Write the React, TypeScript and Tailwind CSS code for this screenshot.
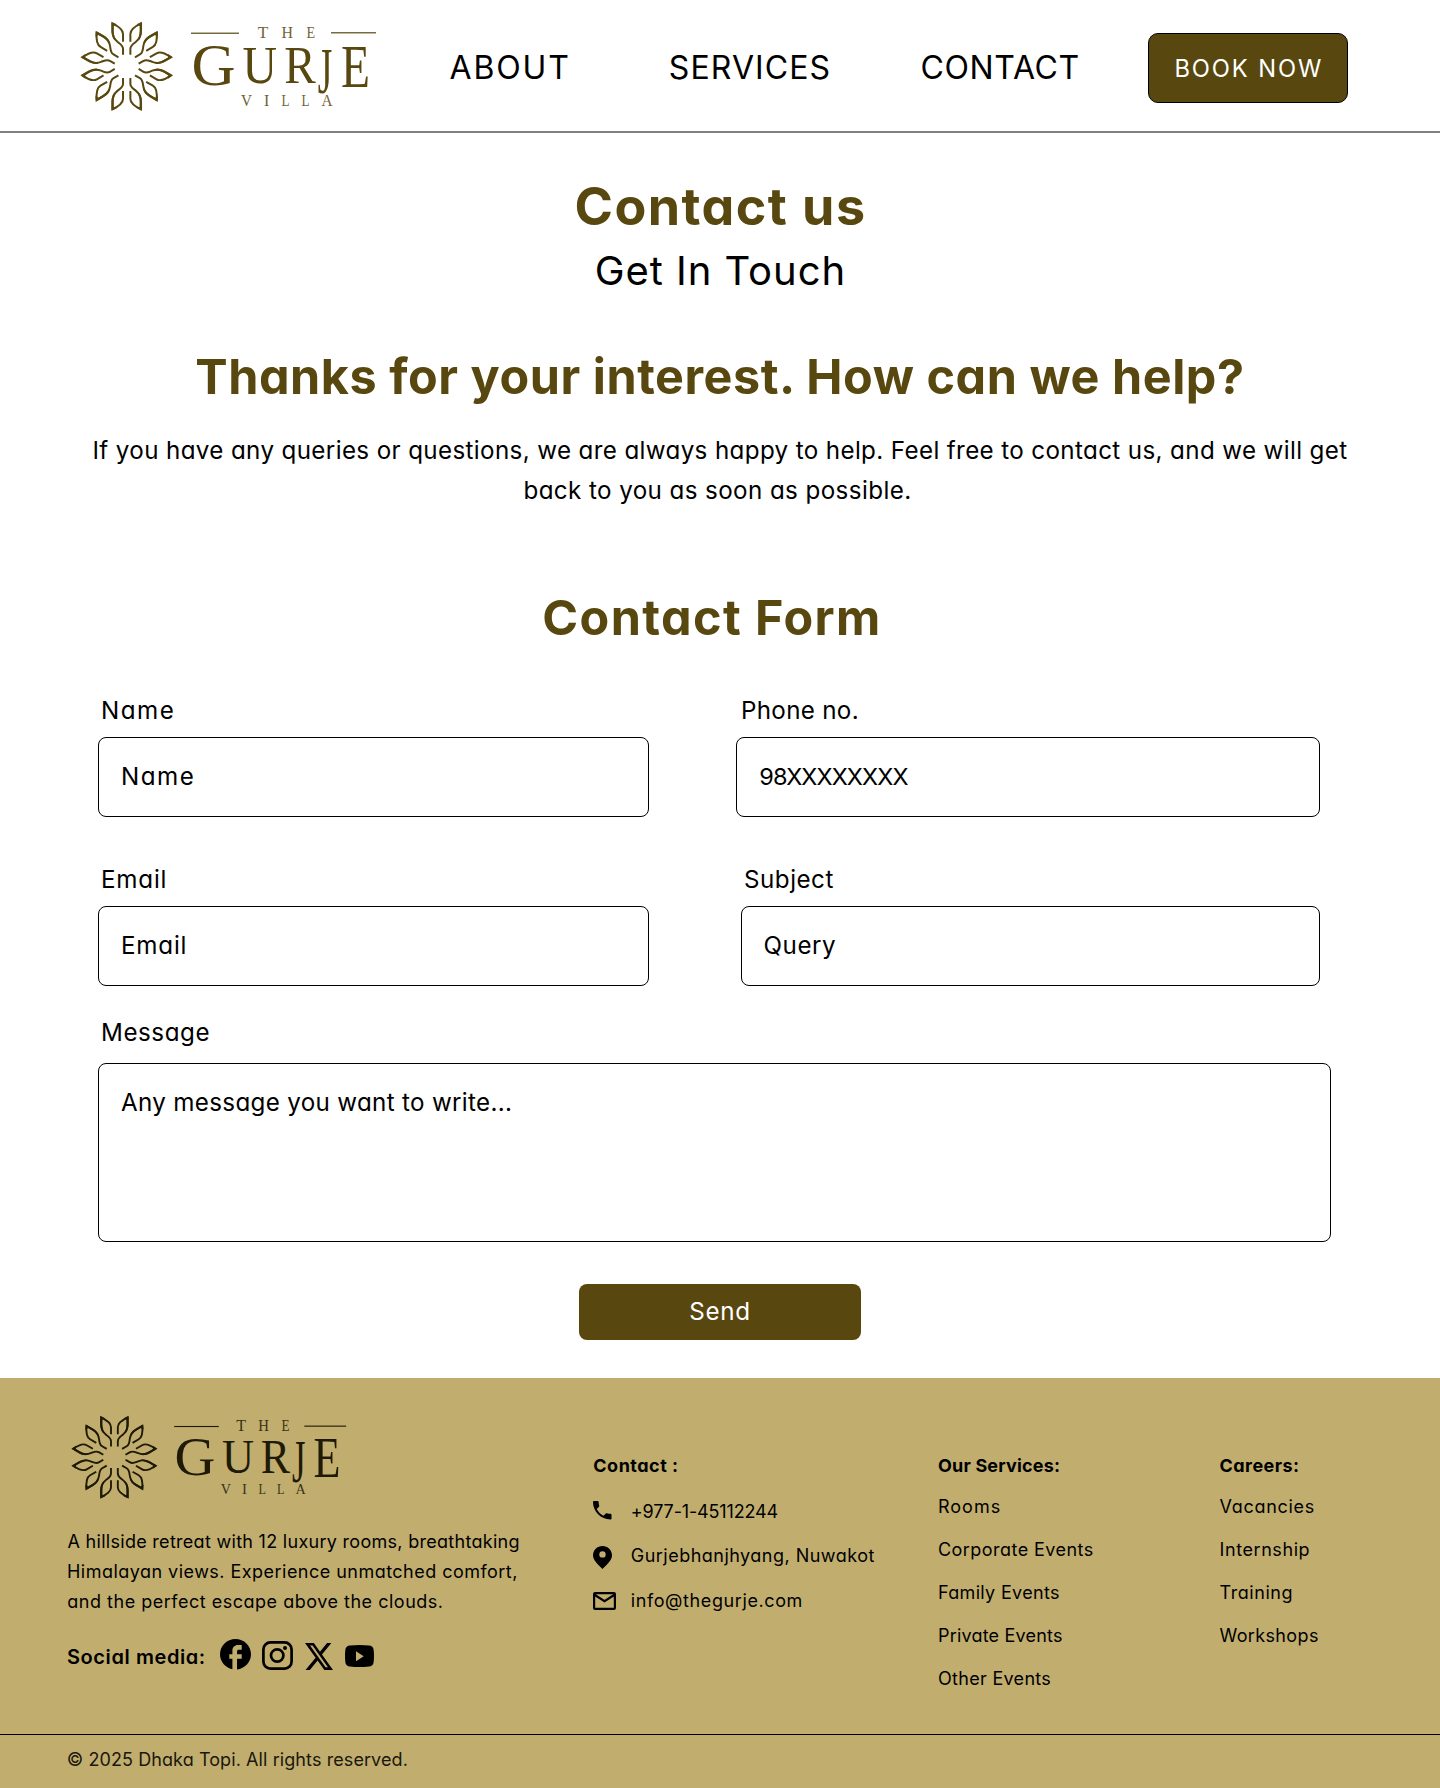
import type { ReactNode } from "react";

const PETAL_ANGLES = [0, 60, 120, 180, 240, 300];

function Petal() {
  return (
    <g fill="none" stroke="currentColor" strokeWidth="6">
      <path d="M44 -129C26 -121 11 -112 11 -97V-74" />
      <path d="M42.5 -130V-106C42.5 -90 37 -81 27 -73C17 -65 11 -62 11 -52V-35" />
      <path d="M46 -134L30 -126L39 -121V-105C39 -92 36 -84 30 -76L38 -80C44 -88 46 -98 46 -108Z" fill="currentColor" stroke="none" />
    </g>
  );
}

function Logo({ className }: { className: string }) {
  return (
    <svg viewBox="80 20 298 92" className={className} fill="currentColor" fontFamily="'Liberation Serif', serif">
      <g transform="translate(126.7 66.3) scale(0.3333)">
        {PETAL_ANGLES.map((a) => (
          <g key={a} transform={`rotate(${a})`}>
            <Petal />
            <g transform="scale(-1 1)">
              <Petal />
            </g>
          </g>
        ))}
      </g>
      <rect x="191" y="32.6" width="48" height="1.2" />
      <rect x="331" y="32.2" width="45" height="1.2" />
      <g fontSize="17.5" opacity="0.85">
        <text x="257.8" y="38" textLength="10.5" lengthAdjust="spacingAndGlyphs">T</text>
        <text x="281.4" y="38" textLength="11.5" lengthAdjust="spacingAndGlyphs">H</text>
        <text x="306.4" y="38" textLength="8.6" lengthAdjust="spacingAndGlyphs">E</text>
      </g>
      <text x="191.4" y="85.3" fontSize="60" textLength="44" lengthAdjust="spacingAndGlyphs">G</text>
      <text x="242.4" y="83.3" fontSize="52" textLength="34.5" lengthAdjust="spacingAndGlyphs">U</text>
      <text x="284.2" y="83.3" fontSize="52" textLength="31.5" lengthAdjust="spacingAndGlyphs">R</text>
      <text x="317.8" y="92.5" fontSize="66" textLength="14.5" lengthAdjust="spacingAndGlyphs">J</text>
      <text x="341" y="87.3" fontSize="62" textLength="29" lengthAdjust="spacingAndGlyphs">E</text>
      <g fontSize="16" opacity="0.85">
        <text x="241" y="106" textLength="11" lengthAdjust="spacingAndGlyphs">V</text>
        <text x="264" y="106" textLength="5.3" lengthAdjust="spacingAndGlyphs">I</text>
        <text x="281.6" y="106" textLength="8" lengthAdjust="spacingAndGlyphs">L</text>
        <text x="301.6" y="106" textLength="8" lengthAdjust="spacingAndGlyphs">L</text>
        <text x="321.5" y="106" textLength="11" lengthAdjust="spacingAndGlyphs">A</text>
      </g>
    </svg>
  );
}

function Field({ label, labelClass, boxClass, className, children }: {
  label: string;
  labelClass: string;
  boxClass: string;
  className: string;
  children: ReactNode;
}) {
  return (
    <div className={className}>
      <div className={`leading-[30px] ${labelClass}`}>{label}</div>
      <div role="textbox" className={`mt-[11px] flex h-20 items-center rounded-lg border border-black ${boxClass}`}>
        {children}
      </div>
    </div>
  );
}

function FacebookIcon() {
  return (
    <svg viewBox="2 2 20 20" preserveAspectRatio="none" className="ml-[14.5px] h-[30.5px] w-[31px]" fill="currentColor">
      <path d="M22 12c0-5.52-4.48-10-10-10S2 6.48 2 12c0 4.84 3.44 8.87 8 9.8V15H8v-3h2V9.5C10 7.57 11.57 6 13.5 6H16v3h-2c-.55 0-1 .45-1 1v2h3v3h-3v6.95c5.05-.5 9-4.76 9-9.95z" />
    </svg>
  );
}

function InstagramIcon() {
  return (
    <svg viewBox="0 0 31 29" className="mt-0.5 ml-[10.5px] h-[29px] w-[31px]" fill="none" stroke="currentColor" strokeWidth="2.7">
      <rect x="1.4" y="1.4" width="28.2" height="26.2" rx="7" />
      <circle cx="15.2" cy="14.5" r="6.2" />
      <circle cx="23" cy="7" r="2" fill="currentColor" stroke="none" />
    </svg>
  );
}

function XIcon() {
  return (
    <svg viewBox="0 .75 16 14.5" preserveAspectRatio="none" className="mt-[3.5px] ml-3 h-[27px] w-[28px]" fill="currentColor">
      <path d="M12.6.75h2.454l-5.36 6.142L16 15.25h-4.937l-3.867-5.07-4.425 5.07H.316l5.733-6.57L0 .75h5.063l3.495 4.633L12.601.75Zm-.86 13.028h1.36L4.323 2.145H2.865z" />
    </svg>
  );
}

function YoutubeIcon() {
  return (
    <svg viewBox="0 0 29 22" className="mt-[5.5px] ml-[12.8px] h-[22px] w-[29px]" fill="currentColor" fillRule="evenodd">
      <path d="M5 .5Q14.5 -.5 24 .5Q28 .8 28.6 4.5Q29.4 11 28.6 17.5Q28 21.2 24 21.5Q14.5 22.5 5 21.5Q1 21.2 .4 17.5Q-.4 11 .4 4.5Q1 .8 5 .5ZM11 6.3V16.3L18.7 11.3Z" />
    </svg>
  );
}

function PhoneIcon() {
  return (
    <svg viewBox="3 3 18 18" className="mt-[4.5px] size-[18.5px]" fill="currentColor">
      <path d="M6.62 10.79c1.44 2.83 3.76 5.14 6.59 6.59l2.2-2.2c.27-.27.67-.36 1.02-.24 1.12.37 2.33.57 3.57.57.55 0 1 .45 1 1V20c0 .55-.45 1-1 1-9.39 0-17-7.61-17-17 0-.55.45-1 1-1h3.5c.55 0 1 .45 1 1 0 1.25.2 2.45.57 3.57.11.35.03.74-.25 1.02l-2.2 2.2z" />
    </svg>
  );
}

function PinIcon() {
  return (
    <svg viewBox="0 0 19 23" className="mt-[5px] h-[23px] w-[19px]" fill="currentColor" fillRule="evenodd">
      <path d="M9.5 0C4.2 0 0 4.1 0 9.3C0 14 4 17.5 9.5 23C15 17.5 19 14 19 9.3C19 4.1 14.8 0 9.5 0ZM9.5 5.2A3.2 3.2 0 1 1 9.5 11.6A3.2 3.2 0 1 1 9.5 5.2Z" />
    </svg>
  );
}

function MailIcon() {
  return (
    <svg viewBox="0 0 23 18" className="mt-[6px] h-[18px] w-[23px]" fill="none" stroke="currentColor" strokeWidth="2.2">
      <rect x="1.1" y="1.1" width="20.8" height="15.8" rx="1" />
      <path d="M1.5 2.8L11.5 9.2L21.5 2.8" />
    </svg>
  );
}

const services = [
  { text: "Rooms", className: "tracking-[1px]" },
  { text: "Corporate Events", className: "tracking-[0.45px]" },
  { text: "Family Events", className: "tracking-[0.32px]" },
  { text: "Private Events", className: "tracking-[0.2px]" },
  { text: "Other Events", className: "tracking-[0.3px]" },
];

const careers = [
  { text: "Vacancies", className: "tracking-[0.7px]" },
  { text: "Internship", className: "tracking-[0.58px]" },
  { text: "Training", className: "tracking-[0.57px]" },
  { text: "Workshops", className: "tracking-[0.36px]" },
];

function LinkList({ items }: { items: { text: string; className: string }[] }) {
  return (
    <ul className="mt-[11px] flex flex-col gap-[13px]">
      {items.map((i) => (
        <li key={i.text} className={i.className}>{i.text}</li>
      ))}
    </ul>
  );
}

export default function App() {
  return (
    <div className="h-[1788px] w-[1440px] overflow-hidden bg-white font-['Inter',sans-serif] text-black [font-feature-settings:'cv11']">
      <header className="grid h-[133px] grid-cols-[369.5px_219.3px_251.7px_227.5px_200px] border-b-2 border-[#808080] pl-20 text-[32px] leading-10 font-normal">
        <Logo className="mt-5 h-[92px] w-[298px] text-[#584810]" />
        <a className="mt-12 tracking-[1.85px]">ABOUT</a>
        <a className="mt-12 tracking-[1.1px]">SERVICES</a>
        <a className="mt-12 tracking-[0.64px]">CONTACT</a>
        <button className="mt-[33px] flex h-[70px] items-center justify-center rounded-[10px] border border-black bg-[#584810] pt-px pl-[1.6px] text-[23.7px] tracking-[1.9px] text-white">
          BOOK NOW
        </button>
      </header>

      <main className="text-[24.2px]">
        <section className="text-center">
          <h1 className="mt-11 pl-[1px] text-[52px] leading-[60px] font-bold tracking-[1.45px] text-[#584810]">Contact us</h1>
          <p className="mt-2.5 pl-[0.8px] text-[40px] leading-[48px] tracking-[0.95px]">Get In Touch</p>
          <h2 className="mt-[54px] text-[48.5px] leading-[56px] font-bold tracking-[0.54px] text-[#584810]">
            Thanks for your interest. How can we help?
          </h2>
          <p className="mt-[26px] leading-10 tracking-[0.36px]">
            If you have any queries or questions, we are always happy to help. Feel free to contact us, and we will get
            <br />
            <span className="pr-[5px] tracking-[0.4px]">back to you as soon as possible.</span>
          </p>
          <h2 className="mt-[79px] pr-[16px] text-[48.5px] leading-[56px] font-bold tracking-[1.4px] text-[#584810]">Contact Form</h2>
        </section>

        <form className="mt-[50px] pl-[98px]">
          <div className="flex">
            <Field label="Name" className="w-[551px]" labelClass="pl-[3px] tracking-[1.5px]" boxClass="pl-[22px] tracking-[1.5px]">
              Name
            </Field>
            <Field label="Phone no." className="ml-[87px] w-[584px]" labelClass="pl-[5px] tracking-[0.3px]" boxClass="pl-[22.2px] text-[23.5px] tracking-[-0.85px]">
              98XXXXXXXX
            </Field>
          </div>
          <div className="mt-12 flex">
            <Field label="Email" className="w-[551px]" labelClass="pl-[3px] tracking-[0.8px]" boxClass="pl-[22px] tracking-[0.8px]">
              Email
            </Field>
            <Field label="Subject" className="ml-[92px] w-[579px]" labelClass="pl-[3px] tracking-[0.5px]" boxClass="pl-[21.6px] tracking-[0.5px]">
              Query
            </Field>
          </div>
          <div className="mt-8 pl-[3px] leading-[30px] tracking-[0.55px]">Message</div>
          <div role="textbox" className="mt-[15px] h-[179px] w-[1233px] rounded-lg border border-black pt-[18.5px] pl-[22px] leading-10 tracking-[0.32px]">
            Any message you want to write...
          </div>
          <button type="button" className="mt-[42px] ml-[481px] flex h-14 w-[282px] items-center justify-center rounded-lg bg-[#584810] pt-px tracking-[0.65px] text-white">
            Send
          </button>
        </form>
      </main>

      <footer className="mt-[38px] bg-[#c1ae6f] text-[18px] leading-[30px]">
        <div className="grid h-[356px] grid-cols-[526px_345px_281.5px_auto] pl-[67px]">
          <div>
            <Logo className="mt-9 ml-[3.5px] h-[86px] w-[277px] text-[#1e1a05]" />
            <p className="mt-[26.5px] whitespace-nowrap">
              <span className="block pl-[0.5px] tracking-[0.29px]">A hillside retreat with 12 luxury rooms, breathtaking</span>
              <span className="block tracking-[0.47px]">Himalayan views. Experience unmatched comfort,</span>
              <span className="block pl-[0.3px] tracking-[0.51px]">and the perfect escape above the clouds.</span>
            </p>
            <div className="mt-[22.5px] flex items-start">
              <span className="mt-[3px] w-[138.5px] text-[20px] font-semibold tracking-[0.58px] whitespace-nowrap">Social media:</span>
              <FacebookIcon />
              <InstagramIcon />
              <XIcon />
              <YoutubeIcon />
            </div>
          </div>

          <div className="pt-[72.5px]">
            <h3 className="pl-[0.3px] font-bold tracking-[0.5px]">Contact :</h3>
            <ul className="mt-4 flex flex-col gap-[14.5px]">
              <li className="flex h-[30px]">
                <span className="w-[37.8px]"><PhoneIcon /></span>
                <span className="tracking-[-0.15px]">+977-1-45112244</span>
              </li>
              <li className="flex h-[30px]">
                <span className="w-[37.8px]"><PinIcon /></span>
                <span className="tracking-[0.48px]">Gurjebhanjhyang, Nuwakot</span>
              </li>
              <li className="flex h-[30px]">
                <span className="w-[37.8px]"><MailIcon /></span>
                <span className="tracking-[0.6px]">info@thegurje.com</span>
              </li>
            </ul>
          </div>

          <div className="pt-[72.5px]">
            <h3 className="font-bold tracking-[0.18px]">Our Services:</h3>
            <LinkList items={services} />
          </div>

          <div className="pt-[72.5px]">
            <h3 className="font-bold tracking-[0.45px]">Careers:</h3>
            <LinkList items={careers} />
          </div>
        </div>
        <div className="h-[54px] border-t border-black pt-[9.5px] pl-[66.7px] tracking-[0.09px] text-[#1a170c]">
          © 2025 Dhaka Topi. All rights reserved.
        </div>
      </footer>
    </div>
  );
}
